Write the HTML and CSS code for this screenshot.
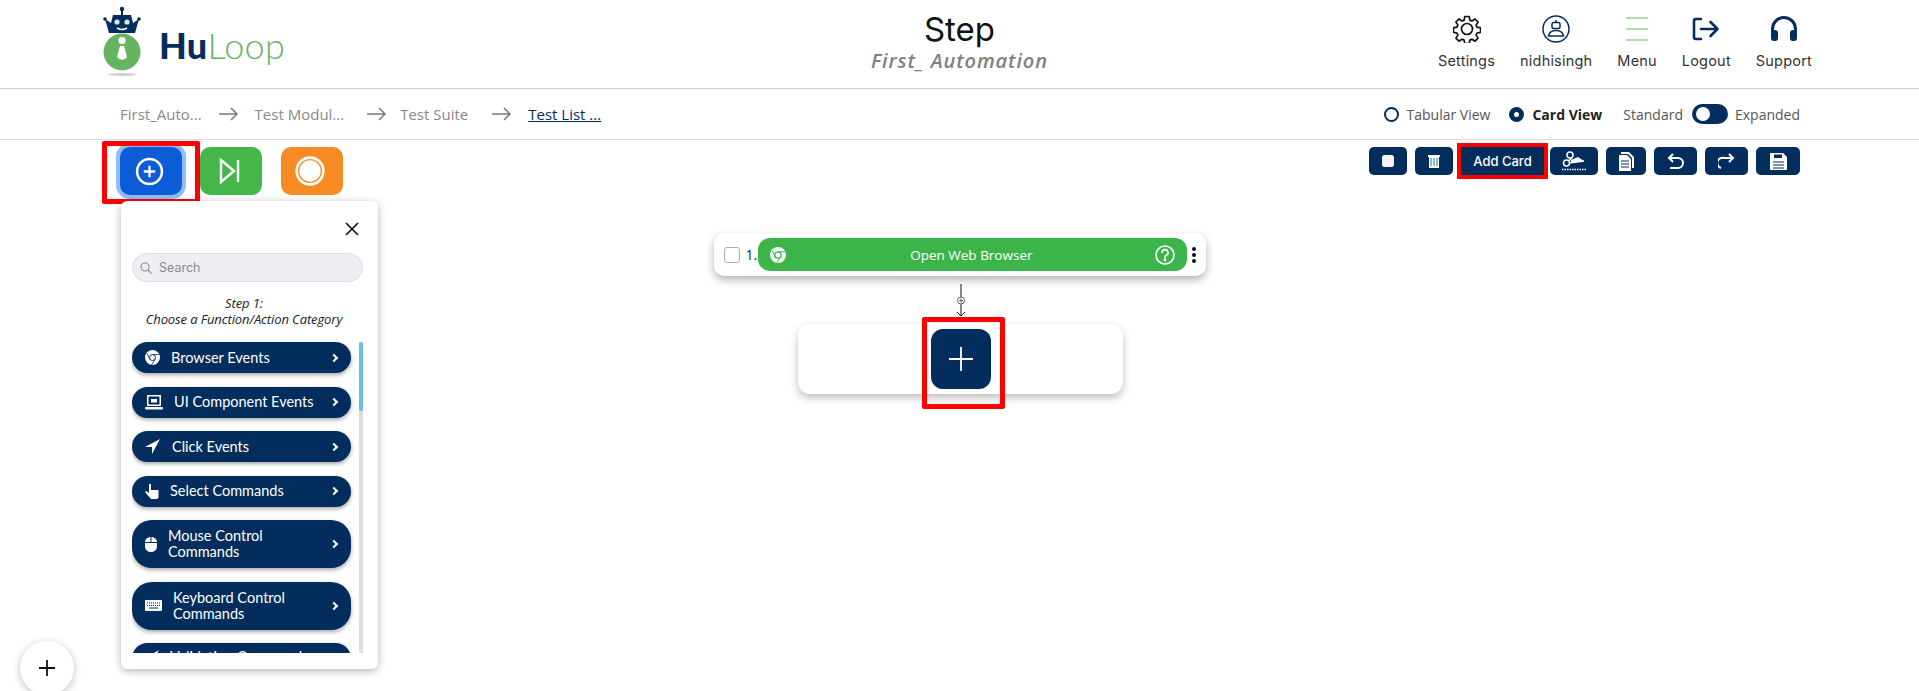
FILE: index.html
```html
<!DOCTYPE html>
<html lang="en">
<head>
    <meta charset="UTF-8">
    <title>HuLoop - Step</title>
    <link rel="stylesheet" href="styles.css">
</head>
<body>
    <header class="topbar">
        <div class="logo">
            <svg class="logo-mark" width="38" height="70" viewBox="0 0 38 70">
                <circle cx="19" cy="3" r="2.200" fill="#032d5c"/>
                <rect x="18" y="4" width="2" height="5" fill="#032d5c"/>
                <path d="M2 13 L8 17 L10 9 H28 L30 17 L36 13 L32 27 H6 Z" fill="#032d5c"/>
                <circle cx="2" cy="13" r="1.800" fill="#032d5c"/>
                <circle cx="36" cy="13" r="1.800" fill="#032d5c"/>
                <circle cx="14" cy="16" r="2.600" fill="#dfe6ee"/>
                <circle cx="24" cy="16" r="2.600" fill="#dfe6ee"/>
                <path d="M14 22 Q19 25 24 22" stroke="#fff" stroke-width="1.500" fill="none"/>
                <circle cx="19" cy="46" r="18.500" fill="#66b45f"/>
                <circle cx="19" cy="34.500" r="3.600" fill="#fff"/>
                <path d="M17 40 H21 L24 51 Q19 57 14 51 Z" fill="#fff"/>
                <ellipse cx="19" cy="68.500" rx="14" ry="1.500" fill="#cfcfcf"/>
            </svg>
            <span class="logo-text"><b>Hu</b>Loop</span>
        </div>
        <div class="page-title">
            <h1>Step</h1>
            <p>First_ Automation</p>
        </div>
        <nav class="topnav">
            <a class="nav-item">
                <svg width="28" height="28" viewBox="0 0 28 28" fill="none" stroke="#111" stroke-width="1.700" stroke-linejoin="round">
                    <path d="M11.800 1.500h4.400l.7 3.600 2.100.9 3-2 3.100 3.100-2 3 .9 2.100 3.600.7v4.400l-3.600.7-.9 2.100 2 3-3.100 3.100-3-2-2.100.9-.7 3.600h-4.400l-.7-3.600-2.100-.9-3 2-3.100-3.100 2-3-.9-2.100-3.600-.7v-4.400l3.600-.7.9-2.100-2-3 3.100-3.100 3 2 2.100-.9z"/>
                    <circle cx="14" cy="14" r="5.500"/>
                </svg>
                <span>Settings</span>
            </a>
            <a class="nav-item">
                <svg width="28" height="28" viewBox="0 0 28 28" fill="none" stroke="#032d5c" stroke-width="1.500">
                    <circle cx="14" cy="14" r="13"/>
                    <rect x="10" y="7.500" width="8" height="6" rx="1.500"/>
                    <line x1="14" y1="5" x2="14" y2="7.500"/>
                    <path d="M6.500 21 Q7.500 15.500 14 15.500 Q20.500 15.500 21.500 21 Z"/>
                </svg>
                <span>nidhisingh</span>
            </a>
            <a class="nav-item">
                <svg width="24" height="28" viewBox="0 0 24 28" fill="#b3dcae">
                    <rect x="1" y="2" width="22" height="2"/>
                    <rect x="1" y="13" width="22" height="2"/>
                    <rect x="1" y="24" width="22" height="2"/>
                </svg>
                <span>Menu</span>
            </a>
            <a class="nav-item">
                <svg width="28" height="28" viewBox="0 0 28 28" fill="none" stroke="#032d5c" stroke-width="2.600" stroke-linecap="round" stroke-linejoin="round">
                    <path d="M9 4 H4 Q2 4 2 6 V22 Q2 24 4 24 H9"/>
                    <path d="M9 14 H25 M18.500 7 L25.500 14 L18.500 21"/>
                </svg>
                <span>Logout</span>
            </a>
            <a class="nav-item">
                <svg width="28" height="28" viewBox="0 0 28 28" fill="#032d5c">
                    <path d="M1 17 V14 A13 13 0 0 1 27 14 V17 H24 V14 A10 10 0 0 0 4 14 V17 Z"/>
                    <rect x="1" y="15" width="7" height="11" rx="3"/>
                    <rect x="20" y="15" width="7" height="11" rx="3"/>
                </svg>
                <span>Support</span>
            </a>
        </nav>
    </header>

    <div class="crumbbar">
        <div class="crumbs">
            <span>First_Auto...</span>
            <svg class="crumb-arrow" width="19" height="14" viewBox="0 0 19 14"><path d="M0 7 H18 M12 1 L18 7 L12 13"/></svg>
            <span>Test Modul...</span>
            <svg class="crumb-arrow arrow-second" width="19" height="14" viewBox="0 0 19 14"><path d="M0 7 H18 M12 1 L18 7 L12 13"/></svg>
            <span>Test Suite</span>
            <svg class="crumb-arrow arrow-third" width="19" height="14" viewBox="0 0 19 14"><path d="M0 7 H18 M12 1 L18 7 L12 13"/></svg>
            <a class="crumb-current">Test List ...</a>
        </div>
        <div class="view-options">
            <span class="radio"></span>
            <span class="view-label">Tabular View</span>
            <span class="radio radio-on"></span>
            <span class="view-label view-active">Card View</span>
            <span class="view-label view-standard">Standard</span>
            <span class="toggle"><i></i></span>
            <span class="view-label">Expanded</span>
        </div>
    </div>

    <main class="workspace">
        <div class="toolbar">
            <div class="mode-buttons">
                <button class="mode-btn mode-add">
                    <svg width="29" height="29" viewBox="0 0 28 28" fill="none" stroke="#fff">
                        <circle cx="14" cy="14" r="12" stroke-width="2.400"/>
                        <path d="M14 8.500 V19.500 M8.500 14 H19.500" stroke-width="2.200"/>
                    </svg>
                </button>
                <button class="mode-btn mode-run">
                    <svg width="22" height="26" viewBox="0 0 22 26" fill="none" stroke="#fff" stroke-width="2.400">
                        <path d="M2 2 L15 13 L2 24 Z"/>
                        <path d="M19 2 V24"/>
                    </svg>
                </button>
                <button class="mode-btn mode-record">
                    <svg width="30" height="30" viewBox="0 0 28 28" fill="none" stroke="#fff">
                        <circle cx="14" cy="14" r="12.500" stroke-width="2.400"/>
                        <circle cx="14" cy="14" r="10" fill="#fff" stroke="none"/>
                    </svg>
                </button>
            </div>
            <div class="tool-buttons">
                <button class="tool-btn tool-sm">
                    <svg width="12" height="12" viewBox="0 0 12 12"><rect width="12" height="12" rx="2.500" fill="#f4f4f4"/></svg>
                </button>
                <button class="tool-btn tool-sm">
                    <svg width="12" height="13" viewBox="0 0 12 13" fill="#fff"><path d="M0 0 H12 V2 H11 V13 H1 V2 H0 Z"/><path d="M3 3 V11 M6 3 V11 M9 3 V11" stroke="#1d6fa5" stroke-width="1"/></svg>
                </button>
                <button class="tool-btn tool-add">Add Card</button>
                <button class="tool-btn tool-cut">
                    <svg width="24" height="20" viewBox="0 0 24 20" fill="none" stroke="#fff" stroke-width="1.500">
                        <circle cx="4.500" cy="12" r="3"/>
                        <circle cx="8" cy="4" r="3"/>
                        <path d="M6.500 10 L10 7 M7 12 L22 10"/>
                        <path d="M9 9 L16 6 L22 10 L9 12 Z" fill="#fff" stroke="none"/>
                        <path d="M0 18.500 H24" stroke-dasharray="1.500 1"/>
                    </svg>
                </button>
                <button class="tool-btn tool-paste">
                    <svg width="15" height="19" viewBox="0 0 15 19" fill="#fff"><path d="M2 0 H10 L15 5 V16 H13 V6 L9 2 H2 Z"/><path d="M0 3 H8 L12 7 V19 H0 Z"/><path d="M2 9 H10 M2 12 H10 M2 15 H10" stroke="#032d5c" stroke-width="1"/></svg>
                </button>
                <button class="tool-btn tool-undo">
                    <svg width="17" height="16" viewBox="0 0 17 16" fill="none" stroke="#fff" stroke-width="2"><path d="M6 1 L2 5 L6 9 M2 5 H11 A4.700 4.700 0 0 1 11 15 H3"/></svg>
                </button>
                <button class="tool-btn tool-redo">
                    <svg width="17" height="16" viewBox="0 0 17 16" fill="none" stroke="#fff" stroke-width="2"><path d="M11 1 L15 5 L11 9 M15 5 H6 A4.700 4.700 0 0 0 3 15"/></svg>
                </button>
                <button class="tool-btn tool-save">
                    <svg width="17" height="17" viewBox="0 0 17 17" fill="#fff"><path d="M0 1 Q0 0 1 0 H13 L17 4 V16 Q17 17 16 17 H1 Q0 17 0 16 Z"/><rect x="4" y="1.500" width="8" height="3.500" fill="#032d5c"/><path d="M3 9 H14 M3 12 H14 M3 15 H14" stroke="#032d5c" stroke-width="1.200"/></svg>
                </button>
            </div>
        </div>

        <aside class="func-panel">
            <button class="panel-close">
                <svg width="14" height="14" viewBox="0 0 14 14" stroke="#111" stroke-width="1.700"><path d="M1 1 L13 13 M13 1 L1 13"/></svg>
            </button>
            <label class="search">
                <svg width="12" height="12" viewBox="0 0 12 12" fill="none" stroke="#8a8a8a" stroke-width="1.100"><circle cx="5" cy="5" r="4"/><path d="M8 8 L11.500 11.500"/></svg>
                <span>Search</span>
            </label>
            <p class="panel-step">Step 1:<br>Choose a Function/Action Category</p>
            <div class="panel-scroll">
                <ul class="func-list">
                    <li class="func-item">
                        <svg class="func-icon" width="15" height="15" viewBox="0 0 15 15"><circle cx="7.500" cy="7.500" r="7.500" fill="#fff"/><circle cx="7.500" cy="7.500" r="3" fill="none" stroke="#032d5c" stroke-width="1"/><path d="M7.500 4.500 H14 M5 9.500 L2 3.500 M10 9.500 L6.500 15" stroke="#032d5c" stroke-width=".8"/></svg>
                        <span class="func-name">Browser Events</span>
                        <span class="chev"></span>
                    </li>
                    <li class="func-item">
                        <svg class="func-icon" width="18" height="15" viewBox="0 0 18 15" fill="#fff"><path d="M2 0 H16 V11 H2 Z M3.500 1.500 V9.500 H14.500 V1.500 Z" fill-rule="evenodd"/><rect x="0" y="12" width="18" height="2.500" rx="1"/><rect x="6" y="4" width="6" height="3.500"/></svg>
                        <span class="func-name name-long">UI Component Events</span>
                        <span class="chev"></span>
                    </li>
                    <li class="func-item">
                        <svg class="func-icon" width="15" height="15" viewBox="0 0 15 15" fill="#fff"><path d="M15 0 L0 8 H7 V15 Z"/></svg>
                        <span class="func-name name-click">Click Events</span>
                        <span class="chev"></span>
                    </li>
                    <li class="func-item">
                        <svg class="func-icon" width="14" height="15" viewBox="0 0 14 15" fill="#fff"><path d="M4 0 H6 V6 H13.500 V13 Q13.500 15 11.500 15 H6 L0 8 L1.500 7 L4 9 Z"/></svg>
                        <span class="func-name">Select Commands</span>
                        <span class="chev"></span>
                    </li>
                    <li class="func-item func-tall">
                        <svg class="func-icon" width="12" height="15" viewBox="0 0 12 15" fill="#fff"><path d="M0 5 A6 5 0 0 1 5.500 0 V5 Z M6.500 0 A6 5 0 0 1 12 5 H6.500 Z M0 6 H12 V9.500 A6 5.500 0 0 1 0 9.500 Z"/></svg>
                        <span class="func-name">Mouse Control Commands</span>
                        <span class="chev"></span>
                    </li>
                    <li class="func-item func-tall">
                        <svg class="func-icon" width="17" height="12" viewBox="0 0 17 12"><rect width="17" height="11" rx="1" fill="#fff"/><path d="M2 3 H15 M2 5.500 H15" stroke="#032d5c" stroke-width="1" stroke-dasharray="1 1"/><path d="M4 8 H13" stroke="#032d5c"/></svg>
                        <span class="func-name">Keyboard Control Commands</span>
                        <span class="chev"></span>
                    </li>
                    <li class="func-item func-last">
                        <svg class="func-icon" width="14" height="14" viewBox="0 0 14 14" fill="#fff"><path d="M14 0 L0 8 H6 V14 Z"/></svg>
                        <span class="func-name name-long">Validation Commands</span>
                        <span class="chev"></span>
                    </li>
                </ul>
                <div class="scroll-track"><div class="scroll-thumb"></div></div>
            </div>
        </aside>

        <section class="flow">
            <div class="step-card">
                <span class="check"></span>
                <span class="step-num">1.</span>
                <div class="step-pill">
                    <svg width="16" height="16" viewBox="0 0 16 16"><circle cx="8" cy="8" r="8" fill="#fff"/><circle cx="8" cy="8" r="3.200" fill="none" stroke="#3bb54a" stroke-width="1.300"/><path d="M8 4.800 H15 M5.200 9.600 L2 3.500 M10.800 9.600 L7 15.500" stroke="#3bb54a" stroke-width="1"/></svg>
                    <span class="step-name">Open Web Browser</span>
                    <svg width="20" height="20" viewBox="0 0 20 20" fill="none" stroke="#fff" stroke-width="1.700"><circle cx="10" cy="10" r="9"/><path d="M7 7.500 A3 3 0 1 1 11 10.500 Q10 11 10 12.500" stroke-linecap="round"/><circle cx="10" cy="15" r=".6" fill="#fff"/></svg>
                </div>
                <span class="kebab"><i></i><i></i><i></i></span>
            </div>
            <svg class="connector" width="16" height="33" viewBox="0 0 16 33" fill="none" stroke="#111">
                <path d="M8 0 V13 M8 20 V32"/>
                <path d="M4 28 L8 32 L12 28"/>
                <circle cx="8" cy="16.500" r="3.500" stroke="#666"/>
                <path d="M6 16.500 H10 M8 14.500 V18.500" stroke="#444" stroke-width=".8"/>
            </svg>
            <div class="add-card">
                <button class="add-step">
                    <svg width="24" height="24" viewBox="0 0 24 24" stroke="#fff" stroke-width="1.800"><path d="M12 0 V24 M0 12 H24"/></svg>
                </button>
            </div>
        </section>

        <button class="fab">
            <svg width="16" height="16" viewBox="0 0 16 16" stroke="#111" stroke-width="1.800"><path d="M8 0 V16 M0 8 H16"/></svg>
        </button>
    </main>
</body>
</html>
```

FILE: styles.css
```css
*,
*::before,
*::after {
    box-sizing: border-box;
}

html,
body {
    margin: 0;
    height: 691px;
    overflow: hidden;
    background-color: #fff;
}

body {
    font-family: 'Open Sans', sans-serif;
    color: #333;
}

button {
    border: none;
    padding: 0;
    cursor: pointer;
}

/* header */

.topbar {
    height: 89px;
    padding: 6px 103px 0 103px;
    display: grid;
    grid-template-columns: 1fr auto 1fr;
    border-bottom: 1px solid #ccc;
}

.logo {
    display: flex;
    align-items: flex-start;
    gap: 18px;
}

.logo-mark {
    display: block;
}

.logo-text {
    margin-top: 18px;
    font-family: Lato, sans-serif;
    font-size: 36px;
    font-weight: 300;
    line-height: 42px;
    letter-spacing: 0.3px;
    color: #66b45f;
}

.logo-text b {
    font-weight: 900;
    color: #032d5c;
}

.page-title {
    text-align: center;
}

.page-title h1 {
    margin: 3px 0 0;
    font-family: Inter, sans-serif;
    font-size: 33px;
    font-weight: 400;
    line-height: 40px;
    color: #111;
}

.page-title p {
    margin: 0;
    font-family: 'Open Sans', sans-serif;
    font-size: 20px;
    font-weight: 600;
    font-style: italic;
    line-height: 24px;
    letter-spacing: 0.9px;
    color: #808080;
}

.topnav {
    padding-right: 4px;
    display: flex;
    justify-content: flex-end;
    gap: 25px;
}

.nav-item {
    display: flex;
    flex-direction: column;
    align-items: center;
    gap: 8px;
    padding-top: 9px;
    font-family: Inter, sans-serif;
    font-size: 14.500px;
    line-height: 20px;
    letter-spacing: 0.2px;
    color: #333;
}

/* breadcrumb row */

.crumbbar {
    height: 51px;
    padding: 0 119px 0 120px;
    display: flex;
    align-items: center;
    justify-content: space-between;
    border-bottom: 1px solid #ddd;
}

.crumbs {
    display: flex;
    align-items: center;
    gap: 17px;
    font-size: 15px;
    color: #8a8a8a;
}

.crumb-arrow {
    fill: none;
    stroke: #777;
    stroke-width: 1.500;
}

.arrow-second {
    margin: 0 -3px 0 6px;
}

.arrow-third {
    margin-left: 7px;
}

.crumb-current {
    color: #032d5c;
    text-decoration: underline;
}

.view-options {
    display: flex;
    align-items: center;
    font-size: 14px;
    color: #555;
}

.radio {
    width: 15px;
    height: 15px;
    margin-right: 8px;
    border: 2px solid #032d5c;
    border-radius: 50%;
}

.radio-on {
    margin-left: 19px;
    background-color: #032d5c;
    position: relative;
}

.radio-on::after {
    content: "";
    position: absolute;
    top: 3px;
    left: 3px;
    width: 5px;
    height: 5px;
    border-radius: 50%;
    background-color: #fff;
}

.view-active {
    font-weight: 700;
    color: #222;
}

.view-standard {
    margin-left: 21px;
}

.toggle {
    width: 36px;
    height: 20px;
    margin: 0 7px 0 9px;
    padding: 3px 4px;
    border-radius: 10px;
    background-color: #032d5c;
}

.toggle i {
    display: block;
    width: 14px;
    height: 14px;
    border-radius: 50%;
    background-color: #fff;
}

/* toolbar */

.workspace {
    position: relative;
    height: 551px;
}

.toolbar {
    padding: 7px 119px 0 120px;
    display: flex;
    justify-content: space-between;
    align-items: flex-start;
}

.mode-buttons {
    display: flex;
    gap: 18px;
}

.mode-btn {
    width: 62px;
    height: 48px;
    border-radius: 10px;
    display: flex;
    align-items: center;
    justify-content: center;
}

.mode-add {
    position: relative;
    padding-right: 4px;
    background-color: #0c5cd8;
    box-shadow: 0 0 0 4px #8fbdfa;
}

.mode-add::after {
    content: "";
    position: absolute;
    top: -6px;
    left: -18px;
    width: 98px;
    height: 63px;
    border: 5px solid #f00;
    border-radius: 2px;
}

.mode-run {
    margin-right: 1px;
    padding-right: 2px;
    background-color: #45b649;
}

.mode-record {
    padding-right: 4px;
    background-color: #f68b23;
}

.tool-buttons {
    display: flex;
    align-items: center;
    gap: 8px;
}

.tool-btn {
    height: 28px;
    border-radius: 5px;
    background-color: #032d5c;
    color: #fff;
    display: flex;
    align-items: center;
    justify-content: center;
}

.tool-sm {
    width: 38px;
}

.tool-add {
    width: 83px;
    margin-right: -2px;
    border-radius: 0;
    outline: 4px solid #f00;
    font-family: Inter, sans-serif;
    font-size: 13px;
    font-weight: 500;
}

.tool-cut {
    width: 48px;
}

.tool-paste {
    width: 40px;
}

.tool-undo {
    width: 43px;
}

.tool-redo {
    width: 43px;
}

.tool-save {
    width: 44px;
}

/* function panel */

.func-panel {
    position: absolute;
    top: 61px;
    left: 121px;
    width: 257px;
    height: 468px;
    padding: 0 11px;
    border-radius: 6px;
    background-color: #fff;
    box-shadow: 0 2px 8px rgba(0, 0, 0, 0.3);
}

.panel-close {
    display: block;
    height: 14px;
    margin: 21px 8px 0 auto;
    background: none;
}

.search {
    width: 231px;
    height: 29px;
    margin-top: 17px;
    padding-left: 7px;
    display: flex;
    align-items: center;
    gap: 7px;
    border: 1px solid #dcdce4;
    border-radius: 15px;
    background-color: #eeeef3;
    font-family: Inter, sans-serif;
    font-size: 12.500px;
    color: #888;
}

.panel-step {
    width: 224px;
    margin: 13px 0 0;
    font-size: 13px;
    font-style: italic;
    line-height: 16px;
    text-align: center;
    color: #222;
    letter-spacing: -0.100px;
}

.panel-scroll {
    width: 231px;
    height: 311px;
    margin-top: 15px;
    display: flex;
    justify-content: space-between;
    overflow: hidden;
}

.func-list {
    width: 219px;
    margin: 0;
    padding: 0;
    list-style: none;
    display: flex;
    flex-direction: column;
    gap: 13.500px;
}

.func-item {
    flex: none;
    height: 31px;
    padding: 0 14px 0 13px;
    display: flex;
    align-items: center;
    border-radius: 16px;
    background-color: #032d5c;
    box-shadow: 0 2px 4px rgba(0, 0, 0, 0.35);
    color: #fff;
    font-family: Lato, sans-serif;
    font-size: 14.500px;
    line-height: 16px;
}

.func-tall {
    height: 48px;
    border-radius: 20px;
}

.func-last {
    padding-bottom: 4px;
}

.func-icon {
    flex: none;
}

.func-name {
    flex: 1;
    max-width: 134px;
    margin-left: 11px;
    margin-right: auto;
}

.name-long {
    white-space: nowrap;
}

.name-click {
    margin-left: 12px;
}

.chev {
    flex: none;
    width: 6px;
    height: 6px;
    margin-left: 4px;
    border-top: 2px solid #fff;
    border-right: 2px solid #fff;
    transform: rotate(45deg);
}

.scroll-track {
    width: 4px;
    height: 100%;
    background-color: #ddd;
}

.scroll-thumb {
    height: 69px;
    border-radius: 2px;
    background-color: #66bdf0;
}

/* flow canvas */

.flow {
    margin-top: 38px;
    display: flex;
    flex-direction: column;
    align-items: center;
}

.step-card {
    width: 492px;
    height: 43px;
    padding: 5px 5px 5px 10px;
    display: flex;
    align-items: center;
    border-radius: 10px;
    background-color: #fff;
    box-shadow: 0 4px 8px rgba(0, 0, 0, 0.3);
}

.check {
    flex: none;
    width: 16px;
    height: 16px;
    border: 1px solid #aaa;
    border-radius: 3px;
}

.step-num {
    margin-left: 6px;
    font-size: 14px;
    color: #032d5c;
}

.step-pill {
    flex: 1;
    height: 33px;
    margin-left: 1px;
    padding: 0 12px;
    display: flex;
    align-items: center;
    border-radius: 12px;
    background-color: #3bb54a;
    color: #fff;
}

.step-name {
    flex: 1;
    padding-left: 2px;
    text-align: center;
    font-size: 13.500px;
}

.kebab {
    flex: none;
    width: 14px;
    display: flex;
    flex-direction: column;
    align-items: center;
    gap: 2px;
}

.kebab i {
    width: 4px;
    height: 4px;
    border-radius: 50%;
    background-color: #111;
}

.connector {
    display: block;
    margin: 8px 0 0 2px;
}

.add-card {
    width: 325px;
    height: 70px;
    margin: 7px 0 0 2px;
    padding-top: 5px;
    display: flex;
    justify-content: center;
    border-radius: 12px;
    background-color: #fff;
    box-shadow: 0 4px 8px rgba(0, 0, 0, 0.25);
}

.add-step {
    position: relative;
    width: 60px;
    height: 60px;
    border-radius: 12px;
    background-color: #032d5c;
    display: flex;
    align-items: center;
    justify-content: center;
}

.add-step::after {
    content: "";
    position: absolute;
    top: -12px;
    left: -9px;
    width: 83px;
    height: 92px;
    border: 5px solid #f00;
    border-radius: 2px;
}

.fab {
    position: absolute;
    left: 20px;
    top: 501px;
    width: 54px;
    height: 54px;
    border-radius: 50%;
    background-color: #fff;
    box-shadow: 0 2px 8px rgba(0, 0, 0, 0.25);
    display: flex;
    align-items: center;
    justify-content: center;
}
```
